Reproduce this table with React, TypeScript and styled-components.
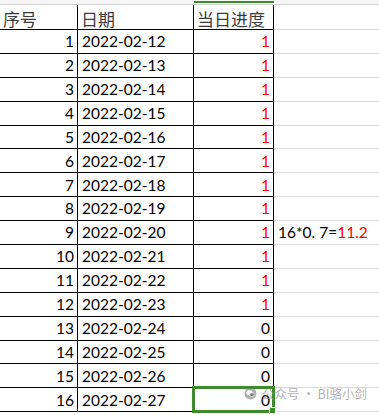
import React from "react";
import styled, { createGlobalStyle } from "styled-components";

const GlobalStyle = createGlobalStyle`
  html, body {
    margin: 0;
    padding: 0;
    background: #fff;
  }
  body {
    width: 379px;
    height: 415px;
    overflow: hidden;
  }
`;

const GREEN = "#3d8b2a";

const Sheet = styled.div`
  position: relative;
  display: grid;
  grid-template-columns: 78px 116px 80px 1fr;
  grid-template-rows: 5px 25px repeat(16, 23.9px);
  font-family: Lato, "Noto Sans CJK SC", sans-serif;
  font-size: 15.5px;
  color: #000;
`;

const ColHead = styled.div<{ $active?: boolean }>`
  box-sizing: border-box;
  border-bottom: 1px solid #d4d4d4;
  background: ${(p) =>
    p.$active
      ? `linear-gradient(${GREEN}, ${GREEN}) 0 1px / 100% 2px no-repeat, #f6f6f6`
      : "#f6f6f6"};
`;

const Cell = styled.div<{
  $right?: boolean;
  $free?: boolean;
  $head?: boolean;
  $red?: boolean;
}>`
  box-sizing: border-box;
  display: flex;
  align-items: center;
  justify-content: ${(p) => (p.$right ? "flex-end" : "flex-start")};
  padding: ${(p) => (p.$head ? "3px 3px 0 3px" : "1px 3px 0 4px")};
  border-bottom: 1px solid ${(p) => (p.$free ? "#dadada" : "#000")};
  border-right: ${(p) => (p.$free ? "none" : "1px solid #000")};
  white-space: nowrap;
  line-height: 1;
  color: ${(p) => (p.$red ? "#ff0000" : p.$head ? "#3c3c3c" : "#000")};
  font-family: ${(p) =>
    p.$head ? `"Noto Sans CJK SC", sans-serif` : `Lato, "Noto Sans CJK SC", sans-serif`};
  font-size: ${(p) => (p.$head ? "17px" : "15.5px")};
`;

const SelectedCell = styled(Cell)`
  position: relative;
  &::after {
    content: "";
    position: absolute;
    left: -2px;
    right: -2px;
    top: -2px;
    bottom: -2px;
    border: 3px solid ${GREEN};
  }
  &::before {
    content: "";
    position: absolute;
    right: -3px;
    bottom: -3px;
    width: 5px;
    height: 5px;
    background: ${GREEN};
    border: 1px solid #fff;
    z-index: 2;
  }
`;

const Red = styled.span`
  color: #ff0000;
`;

const Note = styled.span`
  padding-left: 0;
`;

const Watermark = styled.div`
  position: absolute;
  right: 12px;
  bottom: 9px;
  display: flex;
  align-items: center;
  gap: 5px;
  font-family: "Noto Sans CJK SC", sans-serif;
  font-size: 12.5px;
  color: rgba(150, 150, 150, 0.75);
  pointer-events: none;
`;

const WeChatIcon = () => (
  <svg width="13" height="13" viewBox="0 0 24 24" fill="rgba(120,120,120,0.6)">
    <circle cx="12" cy="12" r="11" />
    <ellipse cx="10" cy="10.5" rx="5.5" ry="4.5" fill="#fff" />
    <ellipse cx="14.5" cy="14" rx="4.5" ry="3.6" fill="rgba(120,120,120,0.9)" stroke="#fff" strokeWidth="1.2" />
  </svg>
);

const rows = Array.from({ length: 16 }, (_, i) => ({
  no: i + 1,
  date: `2022-02-${String(12 + i).padStart(2, "0")}`,
  progress: i < 12 ? 1 : 0,
}));

export default function App() {
  return (
    <>
      <GlobalStyle />
      <Sheet>
        <ColHead />
        <ColHead />
        <ColHead $active />
        <ColHead />

        <Cell $head>序号</Cell>
        <Cell $head>日期</Cell>
        <Cell $head>当日进度</Cell>
        <Cell $free />

        {rows.map((r) => {
          const last = r.no === 16;
          const Value = last ? SelectedCell : Cell;
          return (
            <React.Fragment key={r.no}>
              <Cell $right>{r.no}</Cell>
              <Cell>{r.date}</Cell>
              <Value $right $red={r.progress === 1}>
                {r.progress}
              </Value>
              <Cell $free>
                {r.no === 9 && (
                  <Note>
                    16*0. 7=<Red>11.2</Red>
                  </Note>
                )}
              </Cell>
            </React.Fragment>
          );
        })}

        <Watermark>
          <WeChatIcon />
          <span>公众号 · BI骆小剑</span>
        </Watermark>
      </Sheet>
    </>
  );
}
